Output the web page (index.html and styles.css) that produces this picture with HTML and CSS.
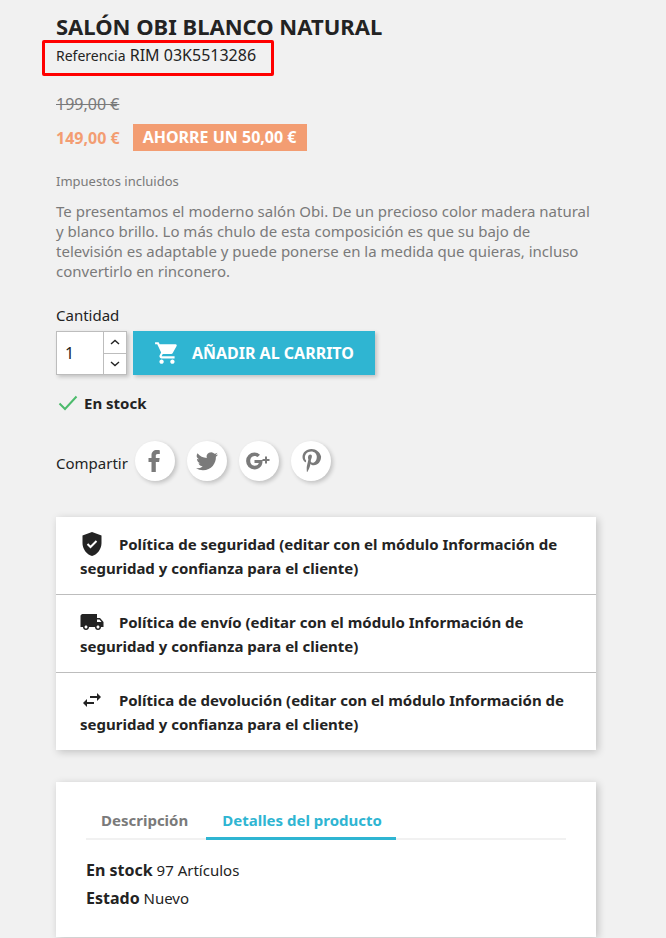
FILE: index.html

```html
<!DOCTYPE html>
<html lang="es">
<head>
  <meta charset="UTF-8" />
  <title>Salón Obi Blanco Natural</title>
  <link rel="stylesheet" href="styles.css">
</head>
<body>
  <div class="highlight"></div>

  <h1>Salón Obi Blanco Natural</h1>
  <p class="reference"><span class="ref-label">Referencia</span> RIM 03K5513286</p>

  <p class="old-price">199,00 €</p>
  <div class="price-row">
    <span class="price">149,00 €</span>
    <span class="discount">Ahorre un 50,00 €</span>
  </div>
  <p class="tax">Impuestos incluidos</p>
  <p class="summary">Te presentamos el moderno salón Obi. De un precioso color madera natural y blanco brillo. Lo más chulo de esta composición es que su bajo de televisión es adaptable y puede ponerse en la medida que quieras, incluso convertirlo en rinconero.</p>

  <p class="qty-label">Cantidad</p>
  <div class="add-row">
    <div class="qty">
      <span class="qty-value">1</span>
      <div class="qty-arrows">
        <span class="qty-arrow">
          <svg width="12" height="8" viewBox="0 0 12 8"><path d="M2 6 6 2.500 10 6" fill="none" stroke="#232323" stroke-width="1.400"/></svg>
        </span>
        <span class="qty-arrow">
          <svg width="12" height="8" viewBox="0 0 12 8"><path d="M2 2 6 5.500 10 2" fill="none" stroke="#232323" stroke-width="1.400"/></svg>
        </span>
      </div>
    </div>
    <div class="add-btn">
      <svg width="26" height="26" viewBox="0 0 24 24" fill="#fff"><path d="M7 18c-1.100 0-2 .9-2 2s.9 2 2 2 2-.9 2-2-.9-2-2-2zM1 2v2h2l3.600 7.590-1.350 2.450c-.16.280-.25.610-.25.960 0 1.100.9 2 2 2h12v-2H7.420c-.14 0-.25-.11-.25-.25l.03-.12.9-1.630h7.450c.75 0 1.410-.41 1.750-1.030l3.580-6.490A1 1 0 0 0 20 4H5.210l-.94-2H1zm16 16c-1.100 0-2 .9-2 2s.9 2 2 2 2-.9 2-2-.9-2-2-2z"/></svg>
      <span>Añadir al carrito</span>
    </div>
  </div>

  <div class="stock">
    <svg width="20" height="16" viewBox="0 0 20 16"><path d="M1.500 8.500 7 14 18.500 1.500" fill="none" stroke="#4cbb6c" stroke-width="2"/></svg>
    <strong>En stock</strong>
  </div>

  <div class="share">
    <span class="share-label">Compartir</span>
    <span class="share-btn">
      <svg width="22" height="24" viewBox="0 0 22 24" fill="#7a7a7a"><path d="M7.500 23V13H4.500V9h3V6.200C7.500 3 9.600 1 12.800 1c1.300 0 2.500.1 3 .2v3.800h-2.100c-1.500 0-1.900.7-1.900 1.800V9h3.900l-.6 4h-3.300v10z"/></svg>
    </span>
    <span class="share-btn">
      <svg width="24" height="24" viewBox="0 0 24 24" fill="#7a7a7a"><path d="M23 5.500c-.8.4-1.700.6-2.600.7.900-.6 1.600-1.400 2-2.500-.9.500-1.800.9-2.900 1.100A4.500 4.500 0 0 0 11.800 9 12.900 12.900 0 0 1 2.500 4.200a4.500 4.500 0 0 0 1.400 6.100c-.7 0-1.400-.2-2-.6 0 2.200 1.500 4.100 3.600 4.500-.7.200-1.400.2-2 .1.600 1.800 2.300 3.100 4.200 3.100A9.100 9.100 0 0 1 1 19.300 12.900 12.900 0 0 0 8 21.300c8.400 0 13.200-7.100 12.900-13.500.9-.6 1.600-1.400 2.100-2.300z"/></svg>
    </span>
    <span class="share-btn">
      <svg width="26" height="18" viewBox="0 0 26 18" fill="#7a7a7a"><path d="M8.500 8v3.100h4.300c-.3 1.500-1.700 2.700-4.300 2.700a5 5 0 0 1 0-9.900c1.400 0 2.500.6 3.100 1.200l2.400-2.400A8.300 8.300 0 0 0 8.500.6a8.400 8.400 0 1 0 0 16.800c4.900 0 8-3.400 8-8.100 0-.5 0-.9-.1-1.300zM21 7V4.500h-2V7h-2.500v2H19v2.500h2V9h2.500V7z"/></svg>
    </span>
    <span class="share-btn">
      <svg width="22" height="26" viewBox="0 0 22 26" fill="#7a7a7a"><path d="M11.500 1C6 1 2.500 4.800 2.500 9c0 2 1.100 4.400 2.800 5.200.5.200.6-.1.800-1 .1-.4 0-.6-.2-.9-.6-.7-1-1.800-1-3 0-3 2.300-5.800 6.200-5.800 3.300 0 5.700 2.200 5.700 5.300 0 3.500-1.800 6-4.100 6-1.300 0-2.200-1-1.900-2.300.4-1.500 1.100-3.100 1.100-4.200 0-1-.5-1.800-1.600-1.800-1.300 0-2.300 1.300-2.300 3.100 0 1.100.4 1.900.4 1.900l-1.500 6.400c-.4 1.700-.1 4.500 0 6 0 .2.300.3.400.1.600-.9 1.900-3.300 2.400-5l.9-3.300c.5.900 1.800 1.600 3.200 1.600 4.300 0 7.300-3.900 7.300-8.700C20 4.300 16.300 1 11.500 1z"/></svg>
    </span>
  </div>

  <section class="card policies">
    <div class="policy">
      <svg class="policy-icon" width="24" height="24" viewBox="0 0 24 24"><path d="M12 0 2.500 3.500v7.500c0 6 4 11.500 9.500 13 5.500-1.500 9.500-7 9.500-13V3.500z" fill="#232323"/><path d="m7.500 12 3 3 6-6" fill="none" stroke="#fff" stroke-width="2"/></svg>
      Política de seguridad (editar con el módulo Información de seguridad y confianza para el cliente)
    </div>
    <div class="policy">
      <svg class="policy-icon" width="24" height="24" viewBox="0 0 24 24" fill="#232323"><path d="M20 8h-3V4H2.500C1.500 4 .5 5 .5 6v11h2.500c0 1.700 1.300 3 3 3s3-1.300 3-3h6c0 1.700 1.300 3 3 3s3-1.300 3-3h2.500v-5zM6 18.500c-.8 0-1.500-.7-1.500-1.500s.7-1.500 1.500-1.500 1.500.7 1.500 1.500-.7 1.500-1.500 1.500zm13.500-9 2 2.500H17V9.500zM18 18.500c-.8 0-1.500-.7-1.500-1.500s.7-1.500 1.500-1.500 1.500.7 1.500 1.500-.7 1.500-1.500 1.500z"/></svg>
      Política de envío (editar con el módulo Información de seguridad y confianza para el cliente)
    </div>
    <div class="policy">
      <svg class="policy-icon" width="24" height="24" viewBox="0 0 24 24" fill="#232323"><path d="M7 11 3 15l4 4v-3h7v-2H7zm14-2-4-4v3h-7v2h7v3z"/></svg>
      Política de devolución (editar con el módulo Información de seguridad y confianza para el cliente)
    </div>
  </section>

  <section class="card tabs-card">
    <div class="tabs">
      <span class="tab">Descripción</span>
      <span class="tab active">Detalles del producto</span>
    </div>
    <p class="detail"><strong>En stock</strong> 97 Artículos</p>
    <p class="detail"><strong>Estado</strong> Nuevo</p>
  </section>
</body>
</html>
```

FILE: styles.css

```css
* { box-sizing: border-box; margin: 0; padding: 0; }
html { height: 938px; overflow: hidden; }
body { font-family: "Noto Sans", sans-serif; background: #f1f1f1; color: #232323; padding: 14px 70px 0 56px; font-size: 15px; position: relative; height: 938px; overflow: hidden; }

.highlight { position: absolute; left: 42px; top: 40px; width: 232px; height: 36px; border: 3px solid #f00; border-radius: 2px; }

h1 { font-size: 22px; line-height: 24px; font-weight: 700; text-transform: uppercase; }
.reference { font-size: 16px; line-height: 20px; margin-top: 7px; }
.ref-label { font-size: 14px; }

.old-price { font-size: 16px; line-height: 20px; color: #7a7a7a; text-decoration: line-through; margin-top: 28px; }
.price-row { display: flex; align-items: center; gap: 13px; margin-top: 10px; }
.price { font-size: 16px; font-weight: 700; color: #f39d72; }
.discount { background: #f39d72; color: #fff; font-size: 16px; font-weight: 700; text-transform: uppercase; line-height: 27px; padding: 0 11px 0 10px; }
.tax { font-size: 13px; line-height: 16px; color: #7a7a7a; margin-top: 22px; }
.summary { font-size: 15px; line-height: 20px; color: #7a7a7a; margin-top: 12px; }

.qty-label { line-height: 20px; margin-top: 24px; }
.add-row { display: flex; gap: 6px; margin-top: 6px; }
.qty { display: flex; width: 71px; height: 44px; background: #fff; border: 1px solid #bdbdbd; box-shadow: 2px 2px 4px rgba(0,0,0,.2); }
.qty-value { flex: 1; font-size: 16px; line-height: 42px; padding-left: 8px; }
.qty-arrows { width: 23px; display: flex; flex-direction: column; border-left: 1px solid #bdbdbd; }
.qty-arrow { flex: 1; display: flex; align-items: center; justify-content: center; }
.qty-arrow + .qty-arrow { border-top: 1px solid #bdbdbd; }
.add-btn { width: 242px; height: 44px; background: #2fb5d2; color: #fff; display: flex; align-items: center; gap: 12px; padding-left: 21px; font-size: 16px; font-weight: 700; text-transform: uppercase; box-shadow: 2px 2px 4px rgba(0,0,0,.2); }

.stock { display: flex; align-items: center; gap: 6px; margin-top: 18px; padding-left: 2px; line-height: 20px; }

.share { display: flex; align-items: center; gap: 12px; margin-top: 28px; }
.share-label { width: 67px; margin-top: 3px; }
.share-btn { width: 40px; height: 40px; border-radius: 50%; background: #fff; display: flex; align-items: center; justify-content: center; box-shadow: 2px 2px 4px rgba(0,0,0,.2); }

.card { background: #fff; box-shadow: 2px 2px 8px rgba(0,0,0,.2); }
.policies { margin-top: 36px; }
.policy { font-weight: 700; line-height: 24px; padding: 15px 24px 0; height: 78px; }
.policy:first-child { height: 77px; }
.policy + .policy { border-top: 1px solid #bdbdbd; }
.policy-icon { vertical-align: top; margin-right: 11px; }

.tabs-card { margin-top: 32px; padding: 20px 30px 0; height: 155px; }
.tabs { display: flex; border-bottom: 2px solid #f1f1f1; height: 38px; }
.tab { font-weight: 700; color: #7a7a7a; padding: 0 15px; line-height: 36px; height: 38px; margin-right: 3px; }
.tab.active { color: #2fb5d2; border-bottom: 3px solid #2fb5d2; padding: 0 14px 0 16px; }
.detail { line-height: 28px; }
.detail strong { font-size: 16px; }
.tabs + .detail { margin-top: 16px; }
```
